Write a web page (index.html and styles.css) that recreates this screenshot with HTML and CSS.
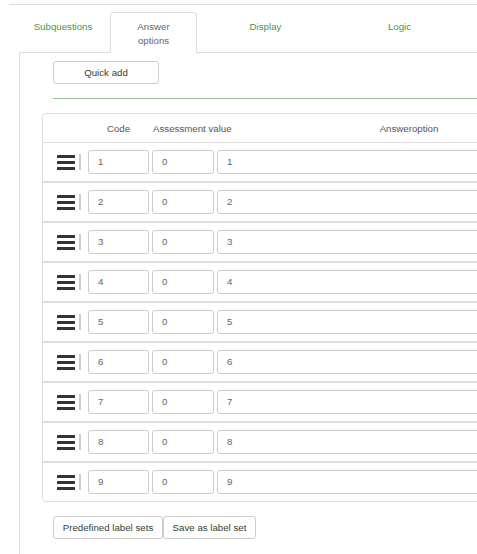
FILE: index.html
```html
<!DOCTYPE html>
<html>
<head>
<meta charset="utf-8">
<link rel="stylesheet" href="styles.css">
</head>
<body>
<div class="wrap">
  <ul class="tabs">
    <li class="tab t1">Subquestions</li>
    <li class="tab t2 active">Answer<br>options</li>
    <li class="tab t3">Display</li>
    <li class="tab t4">Logic</li>
  </ul>
  <div class="pane">
    <button class="btn quick">Quick add</button>
    <div class="rule"></div>
    <div class="panel">
      <div class="head">
        <div class="hc code-h">Code</div>
        <div class="hc assess-h">Assessment value</div>
        <div class="hc answer-h">Answeroption</div>
      </div>
      <div class="row"><span class="handle"><i></i><i></i><i></i></span><span class="sep"></span><span class="inp code">1</span><span class="inp assess">0</span><span class="inp answer">1</span></div>
      <div class="row"><span class="handle"><i></i><i></i><i></i></span><span class="sep"></span><span class="inp code">2</span><span class="inp assess">0</span><span class="inp answer">2</span></div>
      <div class="row"><span class="handle"><i></i><i></i><i></i></span><span class="sep"></span><span class="inp code">3</span><span class="inp assess">0</span><span class="inp answer">3</span></div>
      <div class="row"><span class="handle"><i></i><i></i><i></i></span><span class="sep"></span><span class="inp code">4</span><span class="inp assess">0</span><span class="inp answer">4</span></div>
      <div class="row"><span class="handle"><i></i><i></i><i></i></span><span class="sep"></span><span class="inp code">5</span><span class="inp assess">0</span><span class="inp answer">5</span></div>
      <div class="row"><span class="handle"><i></i><i></i><i></i></span><span class="sep"></span><span class="inp code">6</span><span class="inp assess">0</span><span class="inp answer">6</span></div>
      <div class="row"><span class="handle"><i></i><i></i><i></i></span><span class="sep"></span><span class="inp code">7</span><span class="inp assess">0</span><span class="inp answer">7</span></div>
      <div class="row"><span class="handle"><i></i><i></i><i></i></span><span class="sep"></span><span class="inp code">8</span><span class="inp assess">0</span><span class="inp answer">8</span></div>
      <div class="row last"><span class="handle"><i></i><i></i><i></i></span><span class="sep"></span><span class="inp code">9</span><span class="inp assess">0</span><span class="inp answer">9</span></div>
    </div>
    <div class="actions">
      <button class="btn predefined">Predefined label sets</button><button class="btn save">Save as label set</button>
    </div>
  </div>
</div>
</body>
</html>
```

FILE: styles.css
```css
html, body {
  margin: 0;
  padding: 0;
  overflow: hidden;
  background: #fff;
  height: 100%;
}
body {
  font-family: "Liberation Sans", Arial, sans-serif;
  font-size: 9.7px;
  color: #333;
}
.wrap {
  box-sizing: border-box;
  margin: 4px 0 0 9px;
  border-top: 1px solid #ddd;
  height: calc(100% - 4px);
  overflow: hidden;
}
.tabs {
  list-style: none;
  margin: 0 0 0 10px;
  padding: 7px 0 0 0;
  display: flex;
  border-bottom: 1px solid #ddd;
}
.tab {
  box-sizing: border-box;
  height: 41px;
  margin-bottom: -1px;
  padding-top: 7px;
  line-height: 14px;
  text-align: center;
  color: #459a45;
  border: 1px solid transparent;
  border-radius: 4px 4px 0 0;
  flex: none;
}
.t1 { width: 91px; padding-right: 3px; }
.t2 { width: 87px; }
.t3 { width: 137px; }
.t4 { width: 131px; }
.tab.active {
  color: #666;
  background: #fff;
  border-color: #ddd #ddd transparent #ddd;
}
.pane {
  box-sizing: border-box;
  margin-left: 10px;
  border-left: 1px solid #ddd;
  padding: 8px 0 0 33px;
  height: 600px;
}
.btn {
  box-sizing: border-box;
  height: 23px;
  border: 1px solid #ccc;
  border-radius: 3px;
  background: #fff;
  font-family: "Liberation Sans", Arial, sans-serif;
  font-size: 9.7px;
  color: #2f3f2f;
  padding: 0;
  margin: 0;
  display: inline-block;
  vertical-align: top;
}
.quick { width: 106px; }
.rule {
  margin: 14px 0;
  height: 1px;
  background: #92c092;
}
.panel {
  margin-left: -11px;
  width: 700px;
  border: 1px solid #ddd;
  border-radius: 4px;
}
.head {
  display: flex;
  align-items: center;
  height: 28px;
  padding-left: 45px;
  border-bottom: 1px solid #ddd;
  color: #555;
}
.hc { flex: none; }
.code-h { width: 61px; text-align: center; }
.assess-h { width: 62px; margin-left: 3px; padding-left: 1px; box-sizing: border-box; white-space: nowrap; }
.answer-h { width: 384px; margin-left: 3px; text-align: center; }
.row {
  display: flex;
  align-items: center;
  padding: 7px 0 7px 14px;
  border-bottom: 2px solid #ddd;
}
.row.last { border-bottom: none; }
.handle {
  width: 18px;
  display: flex;
  flex-direction: column;
  gap: 3px;
  flex: none;
}
.handle i {
  display: block;
  height: 3px;
  background: #333;
  border-radius: 0.5px;
}
.sep {
  width: 2px;
  height: 16px;
  background: #ccc;
  margin: 0 7px 0 4px;
  flex: none;
}
.inp {
  box-sizing: border-box;
  height: 24px;
  line-height: 22px;
  border: 1px solid #ccc;
  border-radius: 3px;
  padding-left: 9px;
  color: #666;
  flex: none;
}
.code { width: 61px; }
.assess { width: 62px; margin-left: 3px; }
.answer { width: 384px; margin-left: 3px; }
.actions {
  margin-top: 14px;
  display: flex;
}
.predefined { width: 110px; }
.save { width: 93px; }
```
